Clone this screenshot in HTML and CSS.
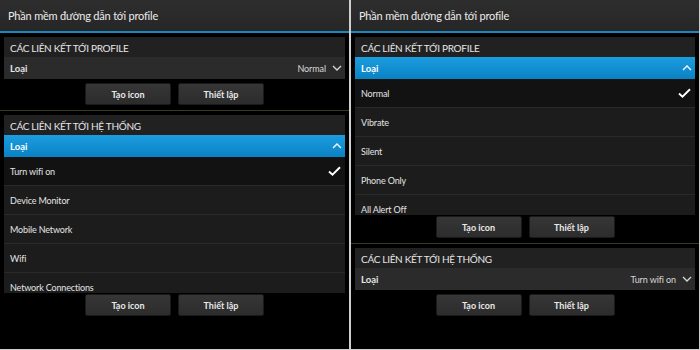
FILE: index.html
```html
<!DOCTYPE html>
<html lang="vi">
<head>
    <meta charset="UTF-8">
    <title>Phần mềm đường dẫn tới profile</title>
    <link rel="stylesheet" href="styles.css">
</head>
<body>
    <div class="screens">
        <div class="screen screen-left">
            <div class="title-bar">Phần mềm đường dẫn tới profile</div>
            <div class="content">
                <div class="card">
                    <div class="card-title">CÁC LIÊN KẾT TỚI PROFILE</div>
                    <div class="dropdown">
                        <span class="dropdown-label">Loại</span>
                        <span class="dropdown-value">Normal</span>
                        <svg class="chevron" width="10" height="6" viewBox="0 0 10 6"><path d="M1 1 L5 5 L9 1" fill="none" stroke="#d8d8d8" stroke-width="1.3"/></svg>
                    </div>
                </div>
                <div class="actions">
                    <button class="action-btn">Tạo icon</button>
                    <button class="action-btn">Thiết lập</button>
                </div>
                <div class="separator"></div>
                <div class="card">
                    <div class="card-title">CÁC LIÊN KẾT TỚI HỆ THỐNG</div>
                    <div class="dropdown dropdown-open">
                        <span class="dropdown-label">Loại</span>
                        <svg class="chevron" width="10" height="6" viewBox="0 0 10 6"><path d="M1 5 L5 1 L9 5" fill="none" stroke="#ffffff" stroke-width="1.3"/></svg>
                    </div>
                    <div class="option-list">
                        <div class="option selected">Turn wifi on
                            <svg class="check" width="13" height="10" viewBox="0 0 13 10"><path d="M1 5.5 L4.5 8.6 L12 1.2" fill="none" stroke="#ffffff" stroke-width="1.9"/></svg>
                        </div>
                        <div class="option">Device Monitor</div>
                        <div class="option">Mobile Network</div>
                        <div class="option">Wifi</div>
                        <div class="option">Network Connections</div>
                    </div>
                </div>
                <div class="actions actions-tight">
                    <button class="action-btn">Tạo icon</button>
                    <button class="action-btn">Thiết lập</button>
                </div>
            </div>
        </div>

        <div class="screen screen-right">
            <div class="title-bar">Phần mềm đường dẫn tới profile</div>
            <div class="content">
                <div class="card">
                    <div class="card-title">CÁC LIÊN KẾT TỚI PROFILE</div>
                    <div class="dropdown dropdown-open">
                        <span class="dropdown-label">Loại</span>
                        <svg class="chevron" width="10" height="6" viewBox="0 0 10 6"><path d="M1 5 L5 1 L9 5" fill="none" stroke="#ffffff" stroke-width="1.3"/></svg>
                    </div>
                    <div class="option-list">
                        <div class="option selected">Normal
                            <svg class="check" width="13" height="10" viewBox="0 0 13 10"><path d="M1 5.5 L4.5 8.6 L12 1.2" fill="none" stroke="#ffffff" stroke-width="1.9"/></svg>
                        </div>
                        <div class="option">Vibrate</div>
                        <div class="option">Silent</div>
                        <div class="option">Phone Only</div>
                        <div class="option">All Alert Off</div>
                    </div>
                </div>
                <div class="actions actions-tight">
                    <button class="action-btn">Tạo icon</button>
                    <button class="action-btn">Thiết lập</button>
                </div>
                <div class="separator"></div>
                <div class="card">
                    <div class="card-title">CÁC LIÊN KẾT TỚI HỆ THỐNG</div>
                    <div class="dropdown">
                        <span class="dropdown-label">Loại</span>
                        <span class="dropdown-value">Turn wifi on</span>
                        <svg class="chevron" width="10" height="6" viewBox="0 0 10 6"><path d="M1 1 L5 5 L9 1" fill="none" stroke="#d8d8d8" stroke-width="1.3"/></svg>
                    </div>
                </div>
                <div class="actions">
                    <button class="action-btn">Tạo icon</button>
                    <button class="action-btn">Thiết lập</button>
                </div>
            </div>
        </div>
    </div>
</body>
</html>
```

FILE: styles.css
```css
body {
    margin: 0;
    background: #cfcfcf;
    font-family: 'Lato', 'Open Sans', sans-serif;
}

.screens {
    display: flex;
    gap: 2px;
    width: 699px;
    height: 349px;
}

.screen {
    background: #000;
    display: flex;
    flex-direction: column;
    overflow: hidden;
}

.screen-left {
    width: 349px;
}

.screen-right {
    width: 348px;
}

.title-bar {
    height: 31px;
    flex-shrink: 0;
    background: linear-gradient(#2e2e2e, #262626);
    border-bottom: 2px solid #1a86bd;
    color: #ececec;
    font-size: 11px;
    letter-spacing: -0.2px;
    line-height: 31px;
    padding-left: 8px;
}

.content {
    padding: 4px 4px 0;
    display: flex;
    flex-direction: column;
}

.card {
    background: #1e1e1e;
}

.card-title {
    height: 20px;
    line-height: 22px;
    padding-left: 6px;
    color: #e6e6e6;
    font-size: 10px;
    letter-spacing: -0.3px;
    background: #212121;
}

.dropdown {
    height: 22px;
    display: flex;
    align-items: center;
    padding: 0 3px 0 6px;
    background: #2b2b2b;
    color: #e6e6e6;
    font-size: 9.5px;
}

.dropdown-label {
    font-weight: 700;
    flex: 1;
}

.dropdown-value {
    margin-right: 6px;
    color: #d8d8d8;
    font-size: 9px;
    letter-spacing: -0.1px;
}

.dropdown-open {
    background: linear-gradient(#1b9ddf, #0a82c4);
    color: #fff;
}

.option-list {
    height: 136px;
    overflow: hidden;
}

.option {
    height: 28px;
    flex-shrink: 0;
    border-bottom: 1px solid #2a2a2a;
    background: #1c1c1c;
    color: #e4e4e4;
    font-size: 9px;
    letter-spacing: -0.15px;
    display: flex;
    align-items: center;
    justify-content: space-between;
    padding: 0 4px 0 6px;
}

.option.selected {
    background: #121212;
}

.actions {
    display: flex;
    justify-content: center;
    gap: 7px;
    margin-top: 4px;
}

.actions-tight {
    margin-top: 1px;
}

.action-btn {
    width: 86px;
    height: 22px;
    background: linear-gradient(#363636, #2c2c2c);
    border: 1px solid #1a1a1a;
    border-radius: 2px;
    color: #e8e8e8;
    font-family: 'Lato', 'Open Sans', sans-serif;
    font-size: 9px;
    font-weight: 700;
    padding: 0;
}

.separator {
    height: 1px;
    background: #3a3a1f;
    margin: 5px -4px 4px;
}
```
